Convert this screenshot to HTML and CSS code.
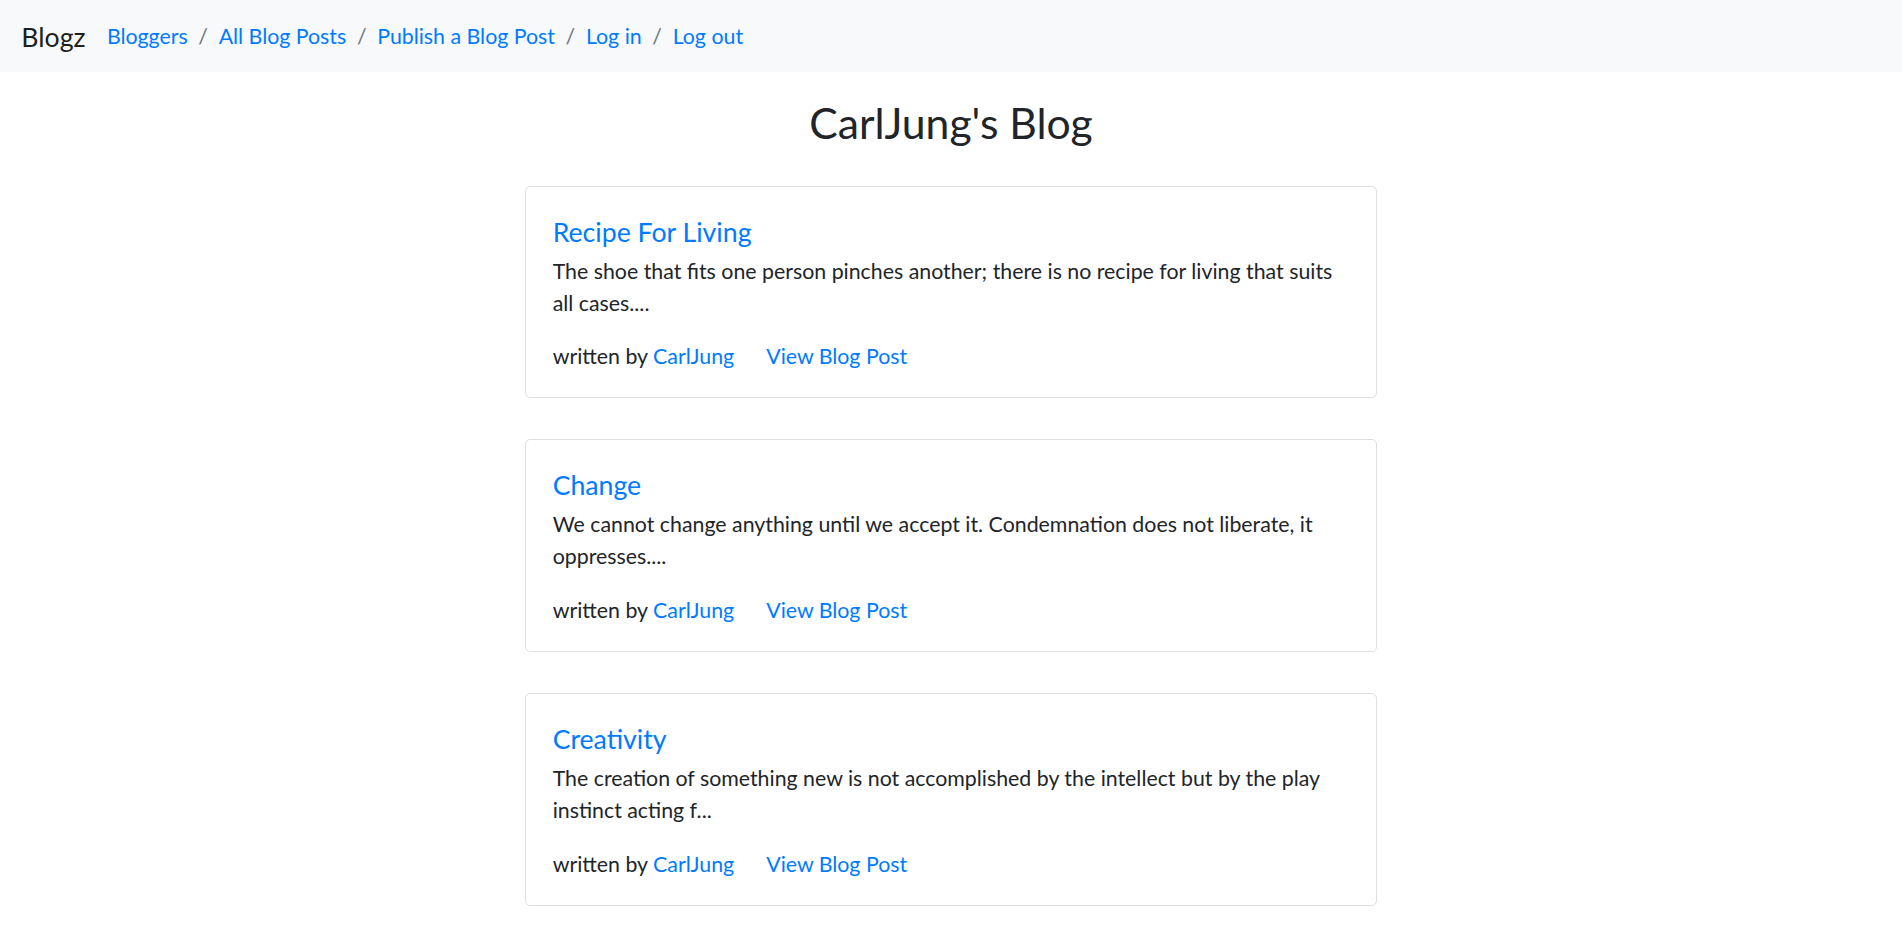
FILE: index.html
```html
<!DOCTYPE html>
<html lang="en">
<head>
<meta charset="utf-8">
<title>Blogz</title>
<link rel="stylesheet" href="styles.css">
</head>
<body>
<nav class="navbar">
  <a class="brand" href="#">Blogz</a>
  <ol class="crumbs">
    <li><a href="#">Bloggers</a></li>
    <li><a href="#">All Blog Posts</a></li>
    <li><a href="#">Publish a Blog Post</a></li>
    <li><a href="#">Log in</a></li>
    <li><a href="#">Log out</a></li>
  </ol>
</nav>
<main class="content">
  <h2 class="page-title">CarlJung's Blog</h2>
  <div class="posts">
    <div class="card">
      <h5 class="card-title"><a href="#">Recipe For Living</a></h5>
      <p class="card-text">The shoe that fits one person pinches another; there is no recipe for living that suits all cases....</p>
      <div class="meta">
        <span>written by <a href="#">CarlJung</a></span>
        <a href="#">View Blog Post</a>
      </div>
    </div>
    <div class="card">
      <h5 class="card-title"><a href="#">Change</a></h5>
      <p class="card-text">We cannot change anything until we accept it. Condemnation does not liberate, it oppresses....</p>
      <div class="meta">
        <span>written by <a href="#">CarlJung</a></span>
        <a href="#">View Blog Post</a>
      </div>
    </div>
    <div class="card">
      <h5 class="card-title"><a href="#">Creativity</a></h5>
      <p class="card-text">The creation of something new is not accomplished by the intellect but by the play instinct acting f...</p>
      <div class="meta">
        <span>written by <a href="#">CarlJung</a></span>
        <a href="#">View Blog Post</a>
      </div>
    </div>
  </div>
</main>
</body>
</html>
```
FILE: styles.css
```css
* { box-sizing: border-box; }

body {
  margin: 0;
  font-family: Lato, "Open Sans", sans-serif;
  font-size: 21.33px;
  line-height: 1.5;
  color: #212529;
  background: #fff;
}

a {
  color: #007bff;
  text-decoration: none;
}

.navbar {
  height: 72px;
  display: flex;
  align-items: center;
  padding: 2px 21.33px 0;
  background: #f8f9fa;
}

.brand {
  font-size: 26.67px;
  color: rgba(0, 0, 0, 0.9);
  margin-right: 21.33px;
  line-height: 1.5;
}

.crumbs {
  display: flex;
  list-style: none;
  margin: 0;
  padding: 0;
}

.crumbs li + li::before {
  content: "/";
  color: #6c757d;
  padding: 0 10.67px;
}

.content {
  width: 852px;
  margin: 0 auto;
}

.page-title {
  margin: 24.5px 0 0;
  font-size: 42.67px;
  font-weight: 400;
  line-height: 1.2;
  text-align: center;
}

.posts {
  display: flex;
  flex-direction: column;
  gap: 41px;
  margin-top: 38px;
}

.card {
  border: 1px solid rgba(0, 0, 0, 0.125);
  border-radius: 5.33px;
  padding: 29px 26.67px 24.5px;
}

.card-title {
  margin: 0 0 8px;
  font-size: 26.67px;
  font-weight: 400;
  line-height: 1.2;
}

.card-text {
  margin: 0 0 21.33px;
}

.meta {
  display: flex;
  gap: 32px;
}
```
